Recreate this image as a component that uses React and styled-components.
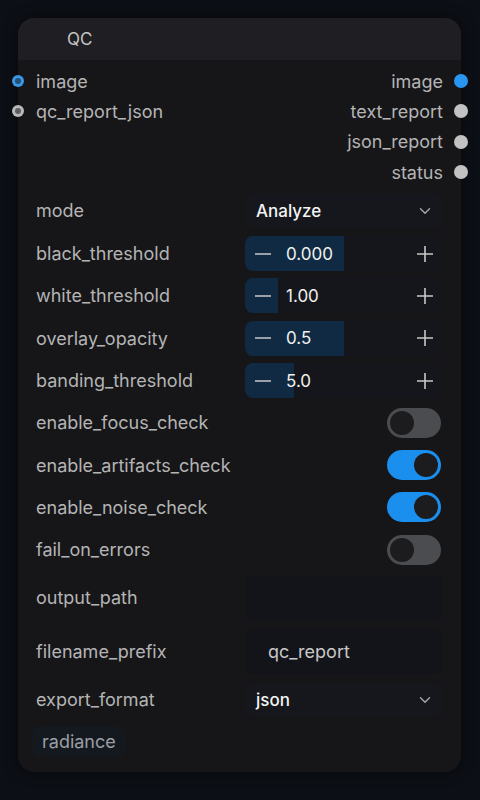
import styled, { createGlobalStyle } from "styled-components";

const GlobalStyle = createGlobalStyle`
  html, body {
    margin: 0;
    padding: 0;
    background: #0c0f15;
    font-family: Inter, "Noto Sans", sans-serif;
  }
`;

const Page = styled.div`
  width: 480px;
  height: 800px;
  padding: 18px 0 0 18px;
  box-sizing: border-box;
`;

const Node = styled.div`
  position: relative;
  width: 443px;
  height: 754px;
  background: #161619;
  border-radius: 16px;
  box-shadow: 0 0 14px rgba(0, 0, 0, 0.5);
  display: flex;
  flex-direction: column;
`;

const Header = styled.div`
  height: 42px;
  background: #1f1f23;
  border-radius: 16px 16px 0 0;
  display: flex;
  align-items: center;
  padding-left: 49px;
  color: #c4c4c4;
  font-size: 17px;
`;

const Slots = styled.div`
  display: grid;
  grid-template-columns: 1fr 1fr;
  padding: 6px 0 0;
`;

const SlotCol = styled.div`
  display: flex;
  flex-direction: column;
  align-items: ${(p) => (p.right ? "flex-end" : "flex-start")};
`;

const Slot = styled.div`
  position: relative;
  height: 30.3px;
  display: flex;
  align-items: center;
  font-size: 18px;
  color: #b4b4b4;
  padding: ${(p) => (p.right ? "0 18px 0 0" : "0 0 0 18px")};
`;

const Dot = styled.span`
  position: absolute;
  top: 50%;
  ${(p) => (p.right ? "right: -7px;" : "left: -6px;")}
  width: ${(p) => (p.right ? 14 : 12)}px;
  height: ${(p) => (p.right ? 14 : 12)}px;
  margin-top: ${(p) => (p.right ? -7 : -6)}px;
  border-radius: 50%;
  background: ${(p) => p.color};
  box-sizing: border-box;
  &::after {
    content: "";
    display: ${(p) => (p.right ? "none" : "block")};
    position: absolute;
    inset: 3px;
    border-radius: 50%;
    background: rgba(20, 20, 24, 0.55);
  }
`;

const Widgets = styled.div`
  display: flex;
  flex-direction: column;
  gap: 8.4px;
  padding: 6.5px 18px 0;
`;

const Row = styled.div`
  display: grid;
  grid-template-columns: 1fr 198px;
  align-items: center;
  height: ${(p) => p.h || 34}px;
`;

const Label = styled.div`
  font-size: 18px;
  color: #b4b4b4;
`;

const Select = styled.div`
  height: 34px;
  border-radius: 8px;
  background: #15171c;
  display: flex;
  align-items: center;
  justify-content: space-between;
  padding: 0 12px 0 11px;
  color: #f4f4f4;
  font-size: 17px;
  font-weight: 500;
`;

const NumberBox = styled.div`
  position: relative;
  height: 35px;
  border-radius: 8px;
  background: #14161b;
  overflow: hidden;
  display: flex;
  align-items: center;
  color: #f0f0f0;
  font-size: 17px;
`;

const Fill = styled.div`
  position: absolute;
  left: 0;
  top: 0;
  bottom: 0;
  background: #102a43;
`;

const Step = styled.span`
  position: relative;
  width: 36px;
  display: flex;
  justify-content: center;
  align-items: center;
`;

const Value = styled.span`
  position: relative;
  flex: 1;
  padding-left: 5px;
`;

const Toggle = styled.div`
  justify-self: end;
  margin-right: 2px;
  width: 54px;
  height: 30px;
  border-radius: 15px;
  background: ${(p) => (p.on ? "#1b8fee" : "#4b4c4f")};
  display: flex;
  align-items: center;
  justify-content: ${(p) => (p.on ? "flex-end" : "flex-start")};
  padding: 0 3px;
  box-sizing: border-box;
`;

const Knob = styled.span`
  width: 24px;
  height: 24px;
  border-radius: 50%;
  background: #1c1c1e;
`;

const TextBox = styled.div`
  height: 45px;
  border-radius: 8px;
  background: #121419;
  display: flex;
  align-items: center;
  padding-left: 23px;
  color: #c8c8c8;
  font-size: 18px;
`;

const Badge = styled.div`
  align-self: flex-start;
  margin: 1px 0 0 -4px;
  height: 31px;
  padding: 0 10px;
  border-radius: 10px;
  background: #141920;
  color: #9a9ea4;
  font-size: 18px;
  display: flex;
  align-items: center;
`;

const Chevron = () => (
  <svg width="12" height="8" viewBox="0 0 12 8" fill="none">
    <path d="M1.5 1.8 6 6.2l4.5-4.4" stroke="#a8a8a8" strokeWidth="1.4" strokeLinecap="round" strokeLinejoin="round" />
  </svg>
);

const Minus = () => (
  <svg width="18" height="18" viewBox="0 0 18 18">
    <path d="M1 9h16" stroke="#c8c8c8" strokeWidth="1.6" />
  </svg>
);

const Plus = () => (
  <svg width="18" height="18" viewBox="0 0 18 18">
    <path d="M1 9h16M9 1v16" stroke="#c8c8c8" strokeWidth="1.6" />
  </svg>
);

const numbers = [
  { name: "black_threshold", value: "0.000", fill: 99 },
  { name: "white_threshold", value: "1.00", fill: 33 },
  { name: "overlay_opacity", value: "0.5", fill: 99 },
  { name: "banding_threshold", value: "5.0", fill: 49 },
];

const toggles = [
  { name: "enable_focus_check", on: false },
  { name: "enable_artifacts_check", on: true },
  { name: "enable_noise_check", on: true },
  { name: "fail_on_errors", on: false },
];

export default function App() {
  return (
    <Page>
      <GlobalStyle />
      <Node>
        <Header>QC</Header>
        <Slots>
          <SlotCol>
            <Slot>
              <Dot color="#3a97e6" />
              image
            </Slot>
            <Slot>
              <Dot color="#b9b9b9" />
              qc_report_json
            </Slot>
          </SlotCol>
          <SlotCol right>
            <Slot right>
              image
              <Dot right color="#2996f2" />
            </Slot>
            <Slot right>
              text_report
              <Dot right color="#c2c2c2" />
            </Slot>
            <Slot right>
              json_report
              <Dot right color="#c2c2c2" />
            </Slot>
            <Slot right>
              status
              <Dot right color="#c2c2c2" />
            </Slot>
          </SlotCol>
        </Slots>
        <Widgets>
          <Row>
            <Label>mode</Label>
            <Select>
              Analyze
              <Chevron />
            </Select>
          </Row>
          {numbers.map((n) => (
            <Row key={n.name}>
              <Label>{n.name}</Label>
              <NumberBox>
                <Fill style={{ width: n.fill }} />
                <Step>
                  <Minus />
                </Step>
                <Value>{n.value}</Value>
                <Step>
                  <Plus />
                </Step>
              </NumberBox>
            </Row>
          ))}
          {toggles.map((t) => (
            <Row key={t.name}>
              <Label>{t.name}</Label>
              <Toggle on={t.on}>
                <Knob />
              </Toggle>
            </Row>
          ))}
          <Row h={45}>
            <Label>output_path</Label>
            <TextBox />
          </Row>
          <Row h={46}>
            <Label>filename_prefix</Label>
            <TextBox>qc_report</TextBox>
          </Row>
          <Row>
            <Label>export_format</Label>
            <Select>
              json
              <Chevron />
            </Select>
          </Row>
          <Badge>radiance</Badge>
        </Widgets>
      </Node>
    </Page>
  );
}
